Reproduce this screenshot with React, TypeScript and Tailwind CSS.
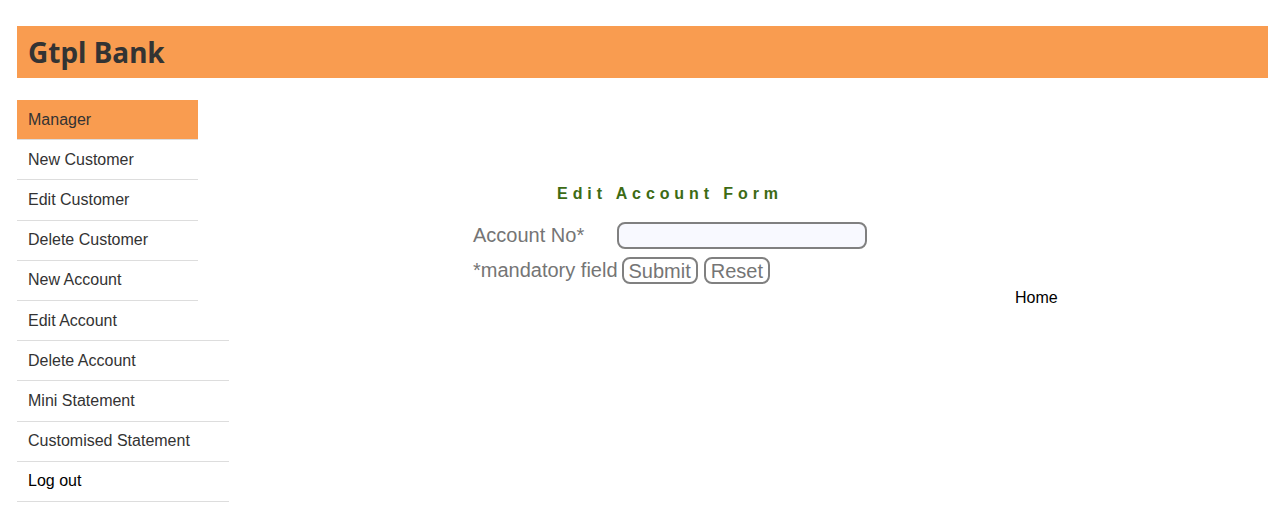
import React from 'react';

const narrowItems = ['New Customer', 'Edit Customer', 'Delete Customer', 'New Account'];
const wideItems = ['Edit Account', 'Delete Account', 'Mini Statement', 'Customised Statement'];

export default function App() {
  return (
    <div className="min-h-screen bg-white pt-[26px] pl-[17px] font-['Liberation_Sans',Arial,sans-serif]">
      {/* Header bar */}
      <div className="h-[52px] bg-[#f99c50] flex items-center pl-[11px]">
        <h1 className="text-[28px] font-bold text-[#333] font-['Noto_Sans',sans-serif] leading-none">Gtpl Bank</h1>
      </div>

      <div className="flex mt-[22px]">
        {/* Sidebar menu */}
        <ul className="w-[212px] shrink-0 text-[16px] text-[#333]">
          <li className="w-[181px] h-[40.2px] bg-[#f99c50] border-b border-[#ddd] flex items-center pl-[11px]">Manager</li>
          {narrowItems.map((item) => (
            <li key={item} className="w-[181px] h-[40.2px] border-b border-[#ddd] flex items-center pl-[11px]">{item}</li>
          ))}
          {wideItems.map((item) => (
            <li key={item} className="w-[212px] h-[40.2px] border-b border-[#ddd] flex items-center pl-[11px]">{item}</li>
          ))}
          <li className="w-[212px] h-[40.2px] border-b border-[#ddd] flex items-center pl-[11px] text-black">Log out</li>
        </ul>

        {/* Main */}
        <div className="flex-1">
          <div className="w-[394px] ml-[244px] mt-[84px]">
            <h2 className="h-[20px] leading-[20px] text-center text-[16px] font-bold tracking-[4.9px] text-[#3d6b14]">Edit Account Form</h2>
            <div className="flex items-center h-[27px] leading-[27px] mt-[18px] text-[20px] text-[#757575]">
              <span className="w-[144px]">Account No*</span>
              <input type="text" className="w-[250px] h-[27px] rounded-[8px] border-2 border-[#808080] bg-[#f8f9ff] outline-none px-2" />
            </div>
            <div className="flex items-center h-[27px] leading-[27px] mt-[8px] text-[20px] text-[#757575]">
              <span>*mandatory field</span>
              <button className="ml-[4px] h-[27px] px-[5px] rounded-[8px] border-2 border-[#808080] bg-white leading-none">Submit</button>
              <button className="ml-[6px] h-[27px] px-[5px] rounded-[8px] border-2 border-[#808080] bg-white leading-none">Reset</button>
            </div>
          </div>
          <div className="ml-[786px] mt-[5px] text-[16px] leading-[18px] text-black">Home</div>
        </div>
      </div>
    </div>
  );
}
